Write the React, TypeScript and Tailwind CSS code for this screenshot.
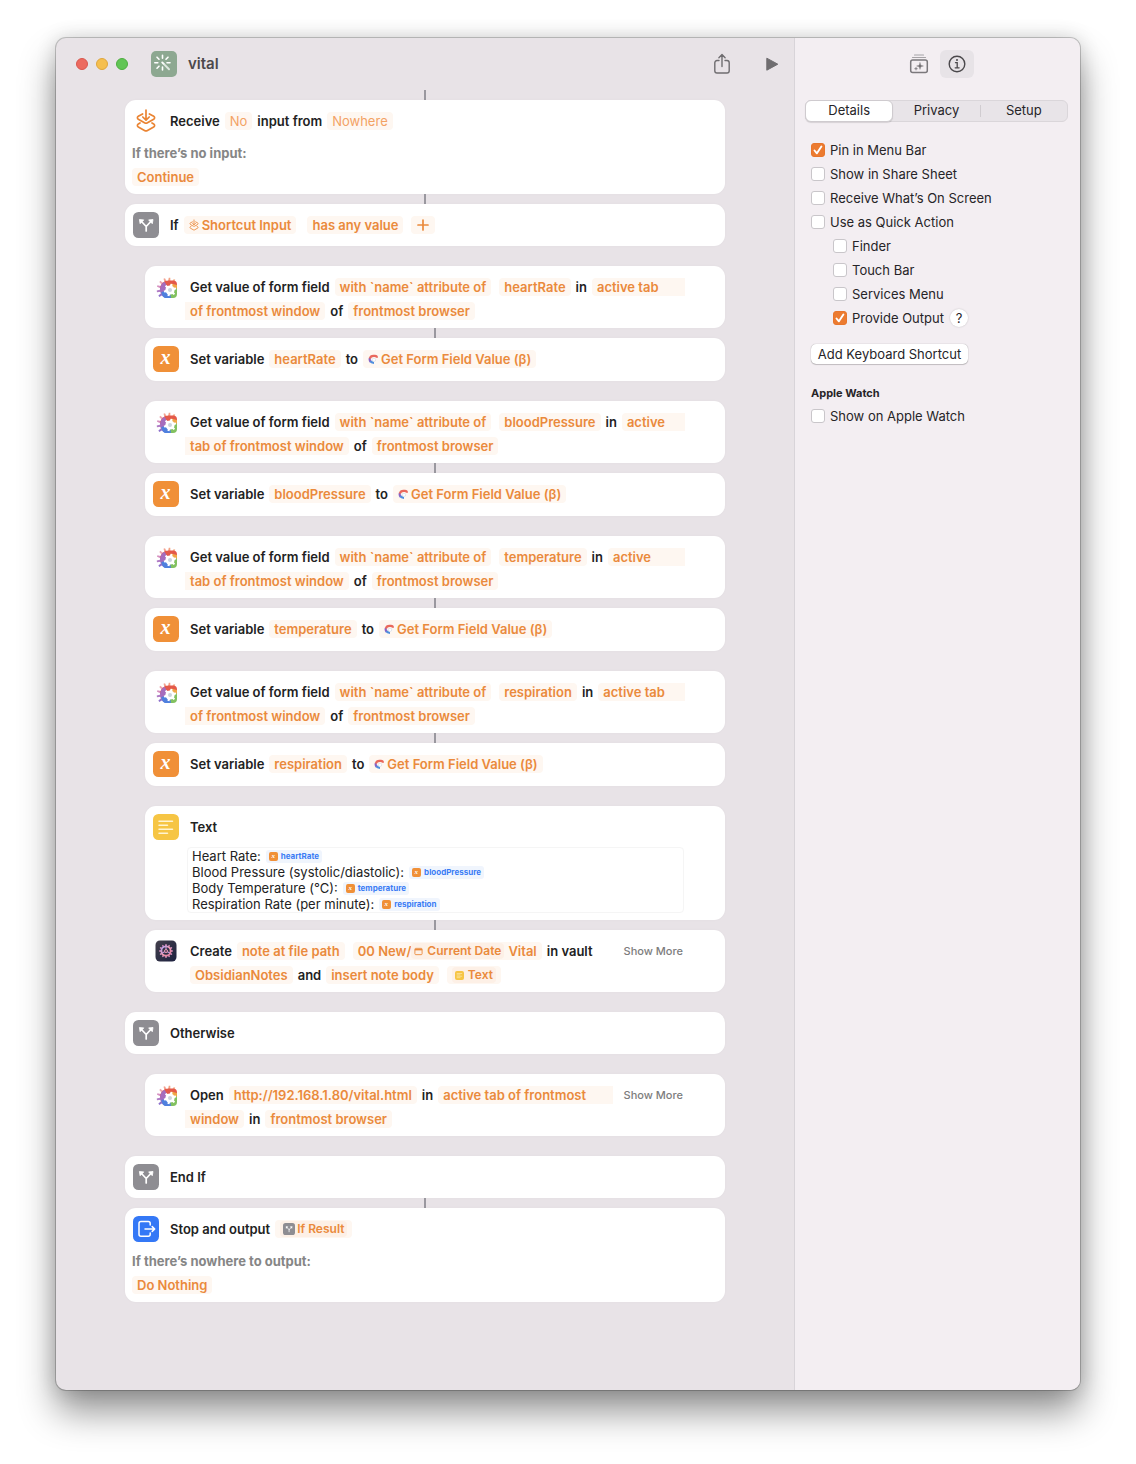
import React from 'react';
import clsx from 'clsx';

type Boxed = { children: React.ReactNode };

function Word({ children }: Boxed) {
  return <span className="whitespace-nowrap">{children}</span>;
}

// edge: which side of the token runs on to the next or the previous line
function Token({ children, edge, light }: Boxed & { edge?: 'start' | 'end'; light?: boolean }) {
  return (
    <button
      type="button"
      className={clsx(
        'flex h-[18px] items-center whitespace-nowrap bg-[#fef7f1] px-[5px] [button+&]:ml-[3px]',
        light ? 'font-normal text-[#f3a264]' : 'text-[#ea8a3c]',
        edge === 'start' && 'grow rounded-l',
        edge === 'end' && '-ml-[5px] rounded-r',
        !edge && 'rounded'
      )}
    >
      {children}
    </button>
  );
}

function Chip({ children }: Boxed) {
  return <span className="flex h-4 items-center rounded bg-[#fdf0e6] px-[3px] text-[12px]">{children}</span>;
}

function Line({ children }: Boxed) {
  return <div className="flex h-6 items-center gap-[5px]">{children}</div>;
}

function Connector() {
  return <div className="mx-auto h-[10px] w-[2px] bg-[#9a989f]" />;
}

type ActionProps = Boxed & {
  icon: React.ReactNode;
  size?: 'bare' | 'single' | 'variable' | 'double';
  more?: boolean;
  footer?: React.ReactNode;
};

const bottomPadding = {
  bare: 'pb-0',
  single: 'pb-[9px]',
  variable: 'pb-[10px]',
  double: 'pb-[5px]',
};

function Action({ icon, children, size = 'double', more, footer }: ActionProps) {
  return (
    <section className={clsx('rounded-[11px] bg-white pt-[9px] shadow-[0_0_3px_rgba(0,0,0,0.03)]', bottomPadding[size])}>
      <div className="flex pl-2">
        <div className="-my-px mr-[11px] h-[26px] w-[26px] shrink-0">{icon}</div>
        <div className="min-w-0 grow">{children}</div>
        {more ? (
          <button type="button" className="ml-[10px] mr-[42px] h-6 w-[60px] shrink-0 whitespace-nowrap text-right text-[11px] font-medium text-[#7d7d7d]">
            Show More
          </button>
        ) : (
          <div className="w-10 shrink-0" />
        )}
      </div>
      {footer}
    </section>
  );
}

function BranchIcon({ className = 'h-[26px] w-[26px]' }: { className?: string }) {
  return (
    <svg viewBox="0 0 26 26" className={className}>
      <rect width="26" height="26" rx="5.500" fill="#8e8d92" />
      <path d="M13.200 19v-4.500L8.500 9.500M13.200 14.500l4.600-5" fill="none" stroke="#fff" strokeWidth="1.700" strokeLinecap="round" strokeLinejoin="round" />
      <path d="M6.400 7.500l4.400.400-3.700 3.800zM20 7.500l-4.400.400 3.700 3.800z" fill="#fff" stroke="#fff" strokeWidth=".8" strokeLinejoin="round" />
    </svg>
  );
}

function VariableIcon({ className = 'h-[26px] w-[26px]' }: { className?: string }) {
  return (
    <svg viewBox="0 0 26 26" className={clsx('overflow-visible', className)}>
      <rect width="26" height="26" rx="5.500" fill="#f09038" />
      <text x="12.500" y="18" textAnchor="middle" fill="#fff" fontFamily="Liberation Serif, serif" fontSize="20" fontWeight="700" fontStyle="italic">
        x
      </text>
    </svg>
  );
}

function LayersIcon({ className = 'h-[26px] w-[26px]', viewBox = '0 0 26 26' }: { className?: string; viewBox?: string }) {
  return (
    <svg viewBox={viewBox} className={className} fill="none" stroke="#ea8433" strokeWidth="1.700" strokeLinecap="round" strokeLinejoin="round">
      <path d="M13 2v9.500M9.800 9l3.200 3.200L16.200 9" />
      <path d="M9.600 5.900L5.300 8.300c-1.200.7-1.200 2.200 0 2.900l6.200 3.600c1 .6 2 .6 3 0l6.200-3.600c1.200-.7 1.200-2.200 0-2.900l-4.300-2.400" />
      <path d="M7 15l-1.700 1c-1.200.7-1.200 2.200 0 2.900l6.200 3.600c1 .6 2 .6 3 0l6.200-3.600c1.200-.7 1.200-2.200 0-2.900L19 15" />
    </svg>
  );
}

const TEETH = Array.from({ length: 12 }, (_, i) => i * 30);
const OUTER_TEETH = [
  { angle: -125, color: '#8d70cc' },
  { angle: -99, color: '#b07cc6' },
  { angle: -73, color: '#d690c0' },
  { angle: -47, color: '#eda4ae' },
  { angle: -21, color: '#f3a290' },
  { angle: 5, color: '#f3a183' },
  { angle: 31, color: '#f5b28d' },
];

function BrowserIcon() {
  return (
    <svg viewBox="0 0 26 26" className="h-[26px] w-[26px]">
      {OUTER_TEETH.map(({ angle, color }) => (
        <path key={angle} d="M14.300 8l.4-4.300h1.600l.4 4.300z" fill={color} transform={`rotate(${angle} 15.500 15.500)`} />
      ))}
      <path d="M7 15a8.500 8.500 0 0 1 8.500-8.500H20A4 4 0 0 1 24 10.500V15z" fill="#e4594a" />
      <path d="M7 15.500c0-3.600 1.800-6.300 4.500-7.800l5 8.300-5 7.500c-2.800-1.300-4.500-4.500-4.500-8z" fill="#a56cbd" />
      <path d="M18 9.500l6 1.500v4.500l-7 .5z" fill="#f0a646" />
      <path d="M24 14.500V20a4 4 0 0 1-4 4h-3.500V16z" fill="#82c160" />
      <path d="M8.300 18l8.200-2 1.500 8h-5.500c-2 0-3.700-2.500-4.200-6z" fill="#4f80de" />
      <circle cx="17" cy="16" r="4.600" fill="#fff" />
      {TEETH.filter((a) => a % 60 === 0).map((a) => (
        <path key={a} d="M15.700 12.400l.3-2.600h2l.3 2.600z" fill="#fff" transform={`rotate(${a + 15} 17 16)`} />
      ))}
      <circle cx="17" cy="16" r="2" fill="#ccd3dc" />
    </svg>
  );
}

function BrowserMark() {
  return (
    <svg viewBox="0 0 10 10" className="mr-[3px] h-[10px] w-[10px]" fill="none" strokeWidth="2.200">
      <path d="M2.800 8A4 4 0 0 1 1.900 4" stroke="#8a62c4" />
      <path d="M1.900 4.400C2.500 2 4.200 1.900 5.500 1.900H7c1.200 0 1.900.6 1.900 1.900" stroke="#e9685c" />
      <path d="M2.400 7.200c.8 1.300 1.800 1.600 3.600 1.600" stroke="#4f8ede" />
      <circle cx="6" cy="5.800" r="1.700" fill="#fff" stroke="#d9dfe8" strokeWidth=".8" />
    </svg>
  );
}

function ObsidianIcon() {
  return (
    <svg viewBox="0 0 26 26" className="h-[26px] w-[26px]">
      <defs>
        <linearGradient id="gear" x1="0" y1="0" x2="1" y2="1">
          <stop offset="0" stopColor="#a9a0f6" />
          <stop offset=".5" stopColor="#f09cb2" />
          <stop offset="1" stopColor="#e07a9c" />
        </linearGradient>
        <linearGradient id="night" x1="0" y1="0" x2="1" y2="1">
          <stop offset="0" stopColor="#43404c" />
          <stop offset="1" stopColor="#1d2140" />
        </linearGradient>
      </defs>
      <rect x="2.500" y="2.500" width="21" height="21" rx="4.500" fill="url(#night)" />
      {TEETH.map((a) => (
        <path key={a} d="M12 8.300l.5-2.300h1l.5 2.300z" fill="#dc92c0" transform={`rotate(${a} 13 13)`} />
      ))}
      <circle cx="13" cy="13" r="4.600" fill="none" stroke="url(#gear)" strokeWidth="1.800" />
      <path d="M13 11.500V9M14.300 13.700l2.500 1.400M11.700 13.700l-2.500 1.400" stroke="#c99fe2" strokeWidth="1.100" />
      <circle cx="13" cy="13" r="1.500" fill="#453c5e" stroke="#f09cb2" strokeWidth="1" />
    </svg>
  );
}

function TextIcon({ className = 'h-[26px] w-[26px]' }: { className?: string }) {
  return (
    <svg viewBox="0 0 26 26" className={className}>
      <rect width="26" height="26" rx="5.500" fill="#f6c544" />
      <path d="M6 7.200h13.500M6 11.200h8.500M6 15.200h13.500M6 19.200h8.500" stroke="#fff4d2" strokeWidth="1.500" strokeLinecap="round" />
    </svg>
  );
}

function OutputIcon() {
  return (
    <svg viewBox="0 0 26 26" className="h-[26px] w-[26px]">
      <rect width="26" height="26" rx="5.500" fill="#3478f6" />
      <path d="M17.200 9V7.500a2 2 0 0 0-2-2H8a2 2 0 0 0-2 2v10.800a2 2 0 0 0 2 2h7.200a2 2 0 0 0 2-2V17M12 13h9.500M19.200 10.600l2.500 2.400-2.500 2.400" fill="none" stroke="#fff" strokeWidth="1.500" strokeLinecap="round" strokeLinejoin="round" />
    </svg>
  );
}

function WandIcon() {
  return (
    <svg viewBox="0 0 26 26" className="h-[26px] w-[26px]">
      <rect width="26" height="26" rx="5" fill="#8da891" />
      <g stroke="#fff" strokeWidth="1.600" strokeLinecap="round">
        <path d="M11.500 4.300v3M11.500 16v3M3.800 11.700h3M16 11.700h3M6 6.200l2 2M17 6.200l-2 2M6 17.200l2-2" />
        <path d="M11.200 11.400l1.600 1.600" strokeWidth="1.900" />
        <path d="M13.200 13.400l4.800 4.800" strokeWidth="2" stroke="#dfe8e0" />
      </g>
    </svg>
  );
}

function FormFieldSteps({ name, first, second }: { name: string; first: string; second: string }) {
  return (
    <div className="ml-5 mt-5">
      <Action icon={<BrowserIcon />}>
        <Line>
          <Word>Get value of form field</Word>
          <Token>with `name` attribute of</Token>
          <Token>{name}</Token>
          <Word>in</Word>
          <Token edge="start">{first}</Token>
        </Line>
        <Line>
          <Token edge="end">{second}</Token>
          <Word>of</Word>
          <Token>frontmost browser</Token>
        </Line>
      </Action>
      <Connector />
      <Action icon={<VariableIcon />} size="variable">
        <Line>
          <Word>Set variable</Word>
          <Token>{name}</Token>
          <Word>to</Word>
          <Token>
            <BrowserMark />
            Get Form Field Value (β)
          </Token>
        </Line>
      </Action>
    </div>
  );
}

const textRows = [
  { label: 'Heart Rate:', variable: 'heartRate' },
  { label: 'Blood Pressure (systolic/diastolic):', variable: 'bloodPressure' },
  { label: 'Body Temperature (°C):', variable: 'temperature' },
  { label: 'Respiration Rate (per minute):', variable: 'respiration' },
];

function Footer({ label, value }: { label: string; value: string }) {
  return (
    <div className="px-[7px] pb-[5px] pt-2">
      <div className="h-6 font-bold text-[#868686]">{label}</div>
      <Line>
        <Token>{value}</Token>
      </Line>
    </div>
  );
}

function Check({ label, checked, nested }: { label: string; checked?: boolean; nested?: boolean }) {
  return (
    <label className={clsx('flex h-6 items-center gap-[5px]', nested && 'ml-[22px]')}>
      <span className="relative h-[14px] w-[14px]">
        <input
          type="checkbox"
          defaultChecked={checked}
          className="peer block h-[14px] w-[14px] appearance-none rounded-[3px] border border-[#c9c6ca] bg-white checked:border-[#e8762c] checked:bg-[#ec7b30]"
        />
        <svg viewBox="0 0 14 14" className="pointer-events-none absolute inset-0 hidden peer-checked:block">
          <path d="M3.500 7.500l2.400 2.800 4.500-6.800" fill="none" stroke="#fff" strokeWidth="1.900" strokeLinecap="round" strokeLinejoin="round" />
        </svg>
      </span>
      <span className="whitespace-nowrap leading-6">{label}</span>
    </label>
  );
}

function Sidebar() {
  return (
    <aside className="w-[286px] shrink-0 rounded-r-[10px] border-l border-[#d8d4d9] bg-[#f3eef2] text-[13px] text-[#262427]">
      <div className="flex h-[52px] items-center justify-center">
        <button type="button" aria-label="Action library" className="flex h-7 w-[34px] items-center justify-center">
          <svg viewBox="0 0 20 20" className="h-5 w-5" fill="none" stroke="#7b787c" strokeLinecap="round" strokeLinejoin="round">
            <path d="M5.500 1h9M3.500 3.500h13" strokeWidth="1.200" stroke="#a6a3a7" />
            <rect x="1.700" y="6" width="16.600" height="12.600" rx="2" strokeWidth="1.500" />
            <path d="M11 8.500l.8 2.700 2.700.8-2.700.8-.8 2.700-.8-2.700-2.700-.8 2.700-.8z" fill="#6b696c" strokeWidth=".3" />
            <path d="M7 13.500v2.400M5.800 14.700h2.400" strokeWidth=".9" />
          </svg>
        </button>
        <button type="button" aria-label="Shortcut details" className="ml-1 flex h-7 w-[34px] items-center justify-center rounded-md bg-[#e7e3e7]">
          <svg viewBox="0 0 18 18" className="h-[18px] w-[18px]" fill="none" stroke="#4a484b" strokeLinecap="round">
            <circle cx="9" cy="9" r="7.800" strokeWidth="1.400" />
            <path d="M7.500 7.700h1.700v5M7.200 12.800h3.900" strokeWidth="1.300" />
            <circle cx="9" cy="5.100" r="1" fill="#4a484b" stroke="none" />
          </svg>
        </button>
      </div>
      <div role="tablist" className="ml-[10px] mr-3 mt-[10px] flex h-[22px] rounded-md border border-[#dad6da] bg-[#e8e4e8]">
        <button type="button" role="tab" aria-selected="true" className="-my-px -ml-px flex-1 rounded-md border border-[#cfcbcf] bg-white shadow-[0_1px_1px_rgba(0,0,0,0.12)]">
          Details
        </button>
        <button type="button" role="tab" aria-selected="false" className="flex-1">
          Privacy
        </button>
        <div className="my-1 w-px bg-[#d0ccd0]" />
        <button type="button" role="tab" aria-selected="false" className="flex-1">
          Setup
        </button>
      </div>
      <div className="px-4 pt-4">
        <Check label="Pin in Menu Bar" checked />
        <Check label="Show in Share Sheet" />
        <Check label="Receive What’s On Screen" />
        <Check label="Use as Quick Action" />
        <Check label="Finder" nested />
        <Check label="Touch Bar" nested />
        <Check label="Services Menu" nested />
        <div className="flex items-center gap-[6px]">
          <Check label="Provide Output" checked nested />
          <button type="button" aria-label="Help" className="h-[18px] w-[18px] rounded-full bg-white leading-[18px] shadow-[0_0_2px_rgba(0,0,0,0.2)]">
            ?
          </button>
        </div>
        <button type="button" className="mt-[14px] block h-5 w-[157px] whitespace-nowrap rounded-[5px] bg-white leading-5 shadow-[0_0_1px_rgba(0,0,0,0.4),0_1px_1px_rgba(0,0,0,0.18)]">
          Add Keyboard Shortcut
        </button>
        <h2 className="mt-5 h-[18px] text-[11px] font-bold leading-[18px]">Apple Watch</h2>
        <div className="mt-[2px]">
          <Check label="Show on Apple Watch" />
        </div>
      </div>
    </aside>
  );
}

export default function App() {
  return (
    <div className="min-h-screen bg-white px-14 pb-[74px] pt-[38px] font-['Inter',sans-serif]">
      <div className="flex rounded-[10px] bg-[#e8e3e7] shadow-[0_0_0_1px_rgba(0,0,0,0.2),0_0_20px_rgba(0,0,0,0.16),0_22px_36px_rgba(0,0,0,0.42)]">
        <main className="min-w-0 grow pb-[88px]">
          <header className="flex h-[52px] items-center pl-5 pr-[15px]">
            <div className="flex gap-2">
              <button type="button" aria-label="Close" className="h-3 w-3 rounded-full border border-[#d9574e] bg-[#ec6a5f]" />
              <button type="button" aria-label="Minimize" className="h-3 w-3 rounded-full border border-[#dfa63d] bg-[#f5bf4f]" />
              <button type="button" aria-label="Zoom" className="h-3 w-3 rounded-full border border-[#4eae40] bg-[#61c555]" />
            </div>
            <div className="ml-[23px]">
              <WandIcon />
            </div>
            <h1 className="ml-[11px] text-[15px] font-semibold text-[#4b494c]">vital</h1>
            <button type="button" aria-label="Share" className="ml-auto">
              <svg viewBox="0 0 18 22" className="h-[22px] w-[18px]" fill="none" stroke="#6f6d70" strokeWidth="1.400" strokeLinecap="round" strokeLinejoin="round">
                <path d="M6 7.500H4A2.200 2.200 0 0 0 1.800 9.700v8.100A2.200 2.200 0 0 0 4 20h10a2.200 2.200 0 0 0 2.200-2.200V9.700A2.200 2.200 0 0 0 14 7.500h-2M9 13.500V1.800M5.900 4.700L9 1.600l3.100 3.100" />
              </svg>
            </button>
            <button type="button" aria-label="Run" className="ml-[34px]">
              <svg viewBox="0 0 14 14" className="h-[14px] w-[14px]" fill="#6f6d70" stroke="#6f6d70" strokeLinejoin="round">
                <path d="M1.800 1.200v12L12.800 7.200z" />
              </svg>
            </button>
          </header>

          <div className="px-[69px] text-[13px] font-semibold leading-6 text-[#222]">
            <Connector />
            <Action icon={<LayersIcon />} size="bare" footer={<Footer label="If there’s no input:" value="Continue" />}>
              <Line>
                <Word>Receive</Word>
                <Token light>No</Token>
                <Word>input from</Word>
                <Token light>Nowhere</Token>
              </Line>
            </Action>
            <Connector />
            <Action icon={<BranchIcon />} size="single">
              <Line>
                <Word>If</Word>
                <Token>
                  <LayersIcon className="mr-[3px] h-3 w-[10px]" viewBox="3 0 20 25" />
                  Shortcut Input
                </Token>
                <span className="w-px" />
                <Token>has any value</Token>
                <Token>
                  <svg viewBox="0 0 14 14" className="h-[14px] w-[14px]" stroke="#ea8a3c" strokeWidth="1.700" strokeLinecap="round">
                    <path d="M7 2v10M2 7h10" />
                  </svg>
                </Token>
              </Line>
            </Action>

            <FormFieldSteps name="heartRate" first="active tab" second="of frontmost window" />
            <FormFieldSteps name="bloodPressure" first="active" second="tab of frontmost window" />
            <FormFieldSteps name="temperature" first="active" second="tab of frontmost window" />
            <FormFieldSteps name="respiration" first="active tab" second="of frontmost window" />

            <div className="ml-5 mt-5">
              <Action icon={<TextIcon />}>
                <Line>
                  <Word>Text</Word>
                </Line>
                <div className="-ml-[3px] mb-[2px] mr-[1px] mt-2 rounded border border-[#f5f5f5] pl-1 font-normal">
                  {textRows.map((row) => (
                    <div key={row.variable} className="flex h-4 items-center gap-[5px] whitespace-nowrap">
                      {row.label}
                      <span className="flex h-[13px] items-center rounded-[3px] bg-[#f0f5fd] px-[3px] text-[8px] font-bold text-[#3a7cf5]">
                        <VariableIcon className="mr-[3px] h-[9px] w-[9px]" />
                        {row.variable}
                      </span>
                    </div>
                  ))}
                </div>
              </Action>
              <Connector />
              <Action icon={<ObsidianIcon />} more>
                <Line>
                  <Word>Create</Word>
                  <Token>note at file path</Token>
                  <Token>
                    00 New/
                    <Chip>
                      <svg viewBox="0 0 10 10" className="mr-1 h-[9px] w-[9px]" fill="none" stroke="#ea8a3c">
                        <rect x="1" y="1.500" width="8" height="7" rx="1" />
                        <path d="M1 3h8" strokeWidth="1.500" />
                      </svg>
                      Current Date
                    </Chip>
                    <span className="ml-1">Vital</span>
                  </Token>
                  <Word>in vault</Word>
                </Line>
                <Line>
                  <Token>ObsidianNotes</Token>
                  <Word>and</Word>
                  <Token>insert note body</Token>
                  <Token>
                    <Chip>
                      <TextIcon className="mr-1 h-[9px] w-[9px]" />
                      Text
                    </Chip>
                  </Token>
                </Line>
              </Action>
            </div>

            <div className="mt-5">
              <Action icon={<BranchIcon />} size="single">
                <Line>
                  <Word>Otherwise</Word>
                </Line>
              </Action>
            </div>

            <div className="ml-5 mt-5">
              <Action icon={<BrowserIcon />} more>
                <Line>
                  <Word>Open</Word>
                  <Token>http://192.168.1.80/vital.html</Token>
                  <Word>in</Word>
                  <Token edge="start">active tab of frontmost</Token>
                </Line>
                <Line>
                  <Token edge="end">window</Token>
                  <Word>in</Word>
                  <Token>frontmost browser</Token>
                </Line>
              </Action>
            </div>

            <div className="mt-5">
              <Action icon={<BranchIcon />} size="single">
                <Line>
                  <Word>End If</Word>
                </Line>
              </Action>
              <Connector />
              <Action icon={<OutputIcon />} size="bare" footer={<Footer label="If there’s nowhere to output:" value="Do Nothing" />}>
                <Line>
                  <Word>Stop and output</Word>
                  <Token>
                    <Chip>
                      <BranchIcon className="mr-[2px] h-3 w-3" />
                      If Result
                    </Chip>
                  </Token>
                </Line>
              </Action>
            </div>
          </div>
        </main>
        <Sidebar />
      </div>
    </div>
  );
}
